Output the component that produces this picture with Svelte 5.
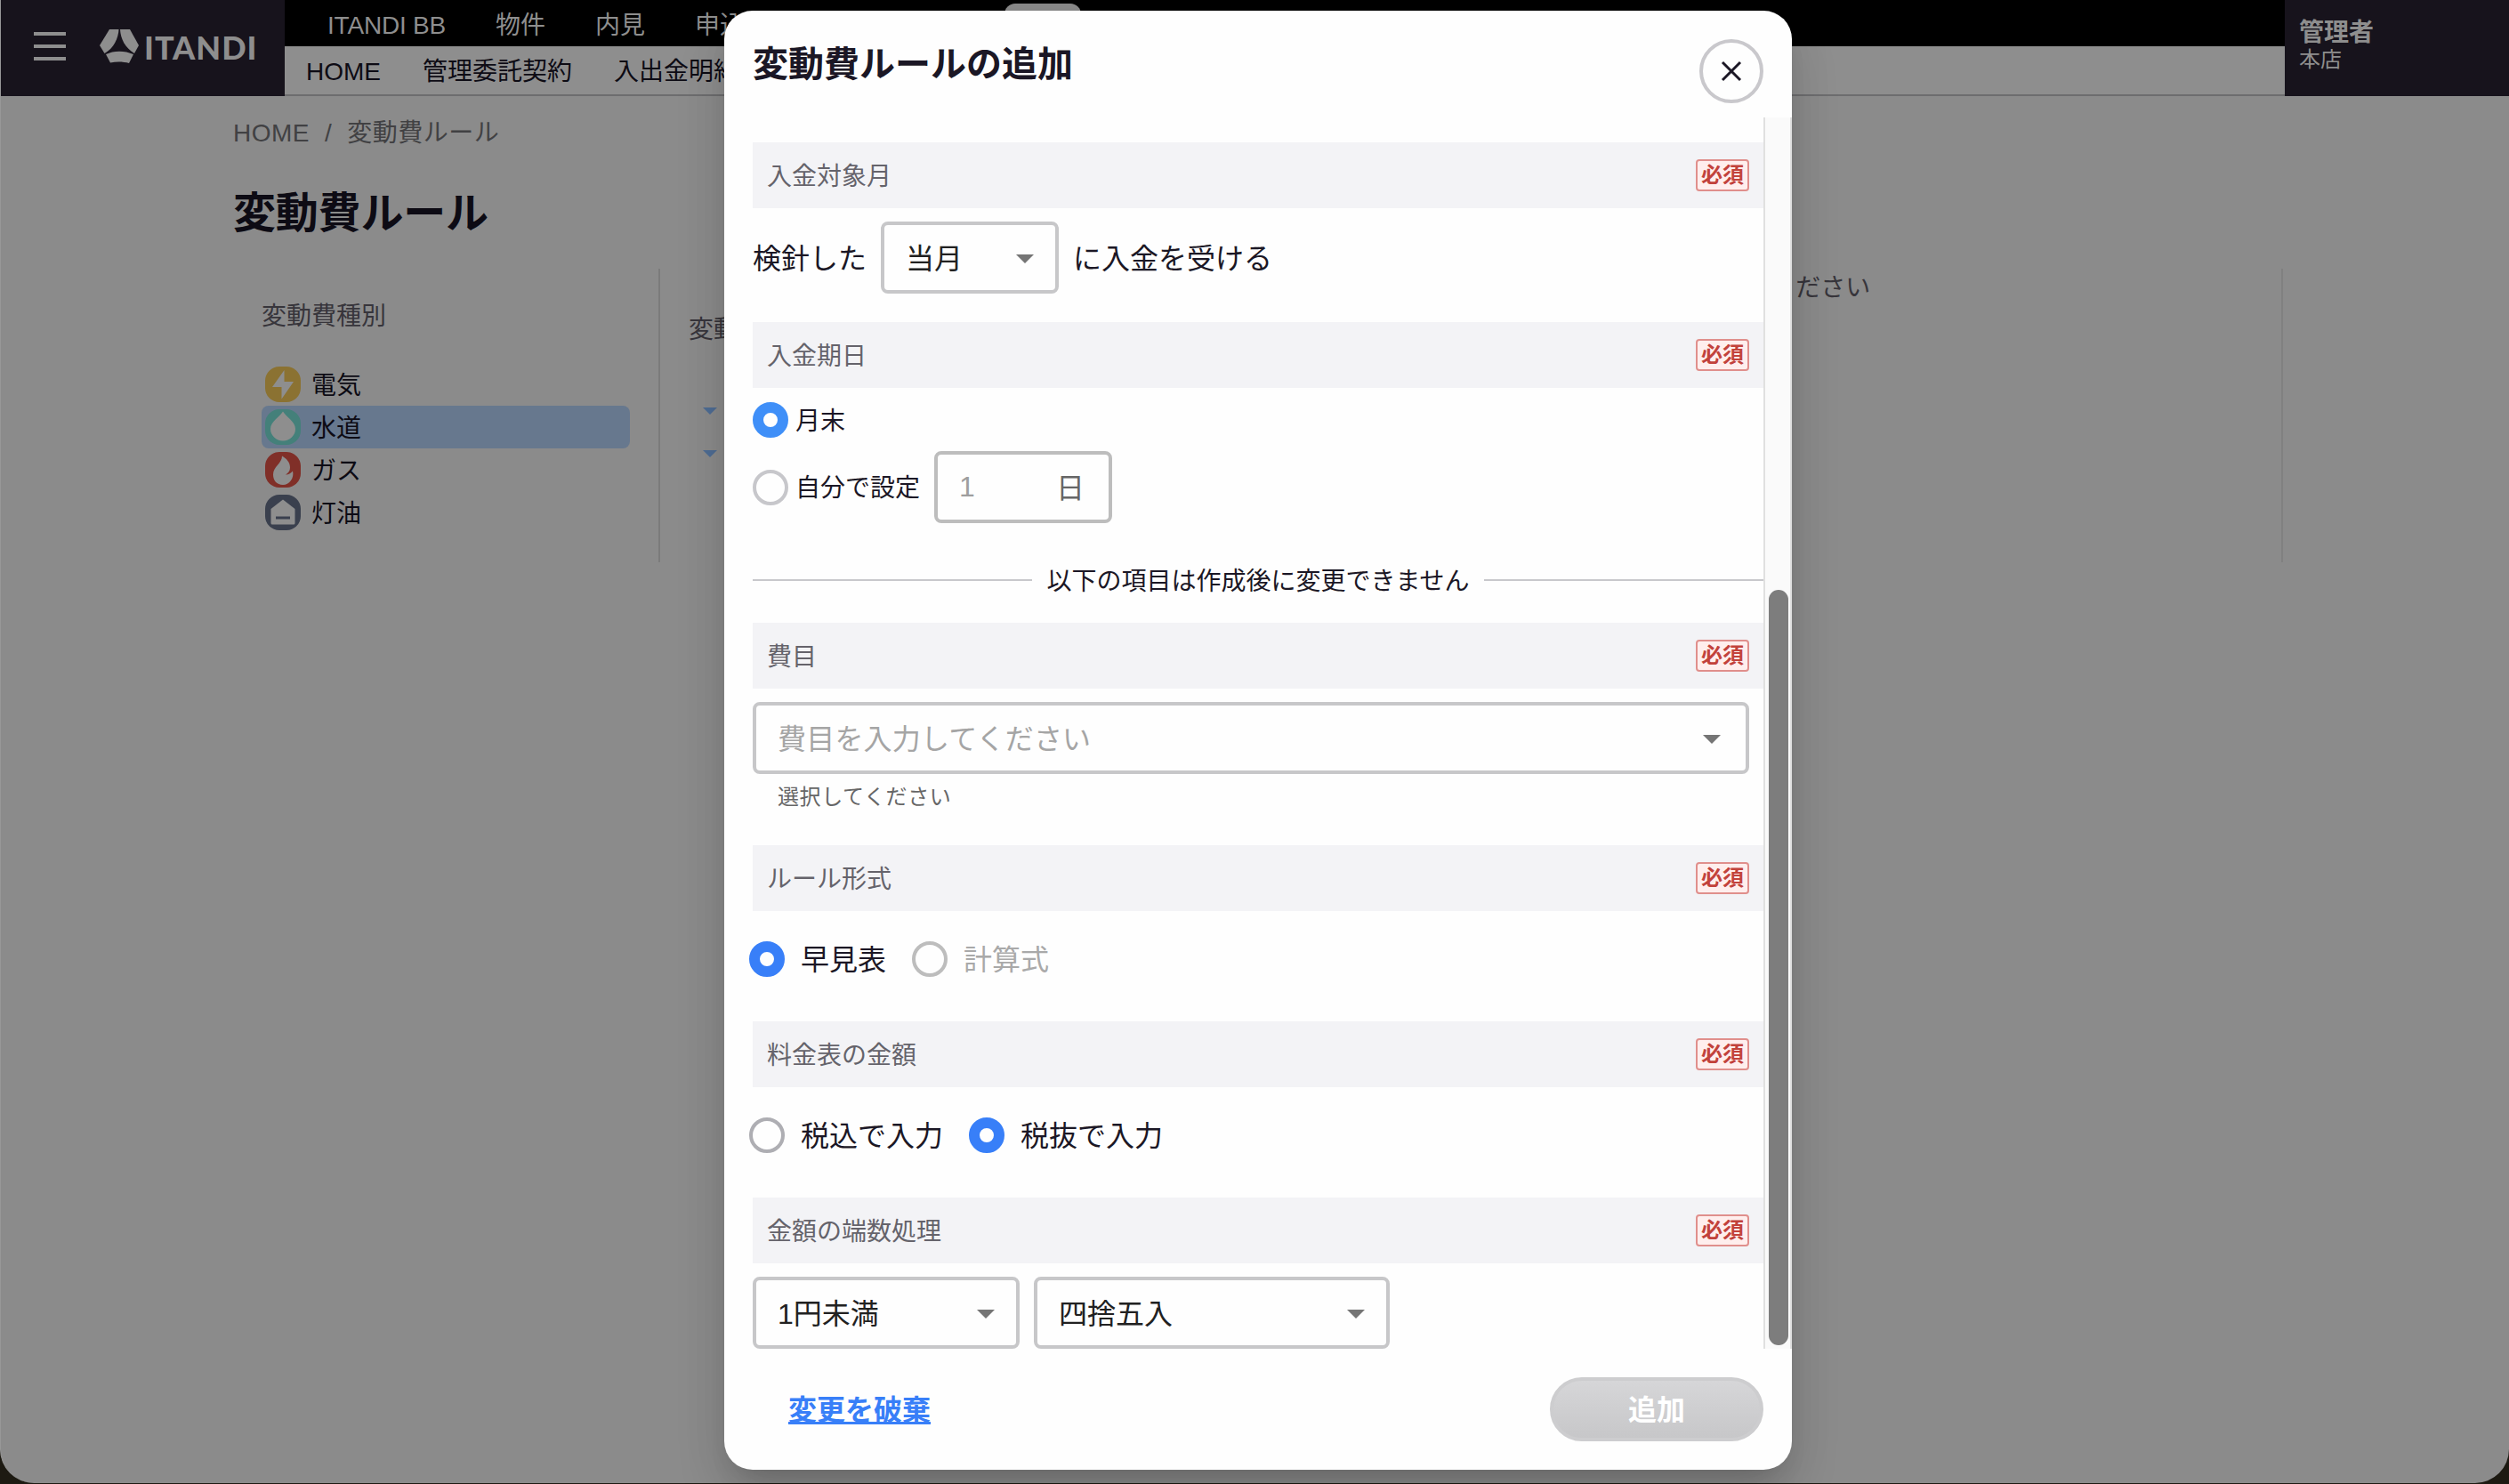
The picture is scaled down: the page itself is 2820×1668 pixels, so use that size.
<script lang="ts">
	const services = ['ITANDI BB', '物件', '内見', '申込'];
	const menus = ['HOME', '管理委託契約', '入出金明細'];

	const kinds = [
		{ id: 'electricity', label: '電気' },
		{ id: 'water', label: '水道' },
		{ id: 'gas', label: 'ガス' },
		{ id: 'kerosene', label: '灯油' }
	];

	let selectedKind = $state('water');
	let dueType = $state('end');
	let format = $state('table');
	let tax = $state('excluded');
</script>

{#snippet sectionHead(label: string)}
	<div class="section-head">
		<span class="section-label">{label}</span>
		<span class="required">必須</span>
	</div>
{/snippet}

{#snippet arrow()}
	<svg class="arrow" width="20" height="10" viewBox="0 0 20 10"><path d="M0 0h20L10 10z" /></svg>
{/snippet}

<div class="window">
	<header class="header">
		<div class="brand">
			<svg class="burger" width="36" height="32" viewBox="0 0 36 32"><path d="M0 0h36v4H0zM0 14h36v4H0zM0 28h36v4H0z" /></svg>
			<svg class="mark" width="44" height="38" viewBox="0 0 44 38">
				<path d="M11 0h10.500C21 10 16 21 5.500 27L0 18z" />
				<path d="M23 0h11l10 18-5 9C29 21 23.500 11 23 0z" />
				<path d="M7 28c9-4.500 21-4.500 31 0l-5 10c-7-2-14-2-21-.5z" />
			</svg>
			<span class="brand-name">ITANDI</span>
		</div>
		<div class="navs">
			<nav class="nav-services">
				{#each services as service}<span>{service}</span>{/each}
			</nav>
			<nav class="nav-menus">
				{#each menus as menu}<span>{menu}</span>{/each}
			</nav>
			<span class="tab"></span>
		</div>
		<div class="account">
			<strong>管理者</strong>
			<span>本店</span>
		</div>
	</header>

	<main class="page">
		<div class="breadcrumb"><span>HOME</span><span>/</span><span>変動費ルール</span></div>
		<h1>変動費ルール</h1>
		<div class="columns">
			<section class="kinds">
				<h2>変動費種別</h2>
				{#each kinds as kind}
					<button class="kind" class:selected={selectedKind === kind.id} onclick={() => (selectedKind = kind.id)}>
						<svg class={kind.id} width="40" height="40" viewBox="0 0 40 40">
							<rect width="40" height="40" rx="16" />
							{#if kind.id === 'electricity'}
								<path d="M21.500 4v13H32L18.500 36.500V23H8z" />
							{:else if kind.id === 'water'}
								<path d="M20 2.500C23 8 34 14 34 22a14 13.500 0 0 1-28 0C6 14 17 8 20 2.500z" />
							{:else if kind.id === 'gas'}
								<path d="M19 4.500c5 3 9 7 9 13 0 4-2 6-5 8 4 0 6-2 8-4 2 8-4 15.500-11 15.500-7 0-11-5-11-11.500C9 16 19 13 19 4.500z" />
							{:else}
								<path d="M20 5.500l13.500 10.500v16a1.500 1.500 0 0 1-1.500 1.500H8A1.500 1.500 0 0 1 6.500 32V16z" />
								<rect class="slot" x="12" y="24.500" width="16" height="3" />
							{/if}
						</svg>
						<span>{kind.label}</span>
					</button>
				{/each}
			</section>
			<section class="rules">
				<h2>変動費ルール</h2>
				<svg class="fold" width="16" height="8" viewBox="0 0 16 8"><path d="M0 0h16L8 8z" /></svg>
				<svg class="fold" width="16" height="8" viewBox="0 0 16 8"><path d="M0 0h16L8 8z" /></svg>
			</section>
			<section class="detail">変動費ルールを選択してください</section>
		</div>
	</main>
</div>

<div class="modal" role="dialog">
	<div class="modal-head">
		<h2>変動費ルールの追加</h2>
		<button class="close" aria-label="閉じる">
			<svg width="24" height="24" viewBox="0 0 24 24"><path d="M2 2l20 20M22 2L2 22" /></svg>
		</button>
	</div>

	<div class="modal-body">
		<div class="form">
			{@render sectionHead('入金対象月')}
			<div class="field month">
				<span>検針した</span>
				<div class="select short"><span>当月</span>{@render arrow()}</div>
				<span>に入金を受ける</span>
			</div>

			{@render sectionHead('入金期日')}
			<div class="field due">
				<button class="radio small" class:checked={dueType === 'end'} onclick={() => (dueType = 'end')}>
					<i></i><span>月末</span>
				</button>
				<div class="due-custom">
					<button class="radio small" class:checked={dueType === 'custom'} onclick={() => (dueType = 'custom')}>
						<i></i><span>自分で設定</span>
					</button>
					<div class="select short day"><span class="number">1</span><span>日</span></div>
				</div>
			</div>

			<div class="notice"><span>以下の項目は作成後に変更できません</span></div>

			{@render sectionHead('費目')}
			<div class="field item">
				<div class="select wide"><span>費目を入力してください</span>{@render arrow()}</div>
				<p>選択してください</p>
			</div>

			{@render sectionHead('ルール形式')}
			<div class="field radios">
				<button class="radio" class:checked={format === 'table'} onclick={() => (format = 'table')}>
					<i></i><span>早見表</span>
				</button>
				<button class="radio disabled" disabled><i></i><span>計算式</span></button>
			</div>

			{@render sectionHead('料金表の金額')}
			<div class="field radios">
				<button class="radio" class:checked={tax === 'included'} onclick={() => (tax = 'included')}>
					<i></i><span>税込で入力</span>
				</button>
				<button class="radio" class:checked={tax === 'excluded'} onclick={() => (tax = 'excluded')}>
					<i></i><span>税抜で入力</span>
				</button>
			</div>

			{@render sectionHead('金額の端数処理')}
			<div class="field rounding">
				<div class="select unit"><span>1円未満</span>{@render arrow()}</div>
				<div class="select method"><span>四捨五入</span>{@render arrow()}</div>
			</div>
		</div>
		<div class="scrollbar"><div class="thumb"></div></div>
	</div>

	<div class="modal-foot">
		<button class="discard">変更を破棄</button>
		<button class="submit" disabled>追加</button>
	</div>
</div>

<style>
	:global(body) {
		background: #1d1a12;
		font-family: 'Liberation Sans', 'Noto Sans CJK JP', sans-serif;
		font-size: 28px;
		color: #1b1725;
	}

	* {
		box-sizing: border-box;
	}

	button {
		padding: 0;
		border: 0;
		background: none;
		font: inherit;
		color: inherit;
	}

	h1,
	h2,
	p {
		margin: 0;
	}

	.window {
		height: 1667px;
		background: #8b8b8b;
		border-left: 1px solid #979797;
		border-radius: 0 0 38px 38px;
		overflow: hidden;
		color: #0d0b14;
	}

	.header {
		display: flex;
		height: 108px;
		margin-left: -1px;
	}

	.brand {
		display: flex;
		align-items: center;
		width: 320px;
		padding-left: 38px;
		background: #17131c;
		fill: #8e8e8e;
	}

	.burger {
		margin-bottom: 4px;
	}

	.mark {
		margin: 0 6px 4px 38px;
	}

	.brand-name {
		padding-bottom: 3px;
		color: #8e8e8e;
		font-family: Lato, sans-serif;
		font-size: 36px;
		font-weight: 900;
		letter-spacing: 1px;
		line-height: 36px;
	}

	.navs {
		position: relative;
		flex: 1;
		white-space: nowrap;
	}

	.nav-services,
	.nav-menus {
		display: flex;
	}

	.nav-services {
		gap: 56px;
		height: 52px;
		padding-left: 48px;
		background: #000;
		color: #8e8e8e;
		line-height: 57px;
	}

	.nav-services span:first-child {
		letter-spacing: -0.2px;
	}

	.nav-menus {
		gap: 47px;
		height: 56px;
		padding-left: 24px;
		background: #8e8e8e;
		border-bottom: 2px solid #6d6d6f;
		line-height: 57px;
	}

	.tab {
		position: absolute;
		left: 809px;
		top: 4px;
		width: 86px;
		height: 40px;
		border-radius: 12px;
		background: #8b8b8b;
	}

	.account {
		display: flex;
		flex-direction: column;
		width: 252px;
		padding: 20px 16px;
		background: #17131c;
		color: #8e8e8e;
		line-height: 34px;
	}

	.account span {
		font-size: 24px;
		line-height: 26px;
	}

	.page {
		padding: 20px 254px 0 261px;
	}

	.breadcrumb {
		display: flex;
		gap: 17px;
		height: 42px;
		line-height: 44px;
		letter-spacing: 0.5px;
		color: #414143;
	}

	h1 {
		height: 132px;
		padding-top: 35px;
		font-size: 48px;
		letter-spacing: -0.2px;
		line-height: 70px;
	}

	.page h2 {
		font-size: 28px;
		font-weight: 400;
		color: #37353b;
	}

	.columns {
		display: flex;
		height: 330px;
		border-right: 2px solid #808080;
	}

	.kinds {
		width: 480px;
		padding: 32px 32px 0;
		border-right: 2px solid #7b7b7b;
	}

	.kinds h2 {
		height: 74px;
		line-height: 44px;
	}

	.kind {
		display: flex;
		align-items: center;
		gap: 12px;
		width: 414px;
		height: 48px;
		padding-left: 4px;
		border-radius: 8px;
	}

	.kind span {
		padding-bottom: 3px;
	}

	.kind.selected {
		background: #67788e;
	}

	.kind path {
		fill: #8e8e8e;
	}

	.electricity rect {
		fill: #8b7232;
	}

	.water rect {
		fill: #44807a;
	}

	.gas rect {
		fill: #802f28;
	}

	.kerosene rect {
		fill: #3a404e;
	}

	.rules {
		width: 470px;
		padding: 48px 32px 0;
	}

	.rules h2 {
		height: 108px;
		line-height: 42px;
	}

	.fold {
		display: block;
		margin: 0 0 40px 16px;
		fill: #4e6c93;
	}

	.detail {
		flex: 1;
		padding-left: 472px;
		line-height: 43px;
		color: #37353b;
	}

	.modal {
		position: absolute;
		left: 814px;
		top: 12px;
		display: flex;
		flex-direction: column;
		width: 1200px;
		height: 1640px;
		background: #fefefe;
		border-radius: 32px;
		box-shadow:
			0 22px 30px -14px rgba(0, 0, 0, 0.14),
			0 30px 60px rgba(0, 0, 0, 0.1),
			0 10px 50px rgba(0, 0, 0, 0.08);
	}

	.modal-head {
		display: flex;
		justify-content: space-between;
		height: 120px;
		padding: 32px 32px 0;
	}

	.modal-head h2 {
		font-size: 40px;
		line-height: 57px;
	}

	.close {
		display: flex;
		align-items: center;
		justify-content: center;
		width: 72px;
		height: 72px;
		border: 4px solid #c9c8cc;
		border-radius: 50%;
	}

	.close path {
		stroke: #1b1725;
		stroke-width: 3;
	}

	.modal-body {
		display: flex;
		height: 1384px;
	}

	.form {
		width: 1168px;
		padding: 28px 0 0 32px;
	}

	.section-head {
		display: flex;
		align-items: center;
		justify-content: space-between;
		height: 74px;
		padding: 0 16px;
		background: #f3f3f6;
		color: #65636b;
	}

	.section-label {
		padding-bottom: 3px;
	}

	.required {
		width: 60px;
		height: 36px;
		border: 2px solid #e08f8c;
		border-radius: 4px;
		background: #ffeeed;
		color: #c2423b;
		font-size: 24px;
		font-weight: 700;
		line-height: 31px;
		text-align: center;
	}

	.field {
		display: flex;
	}

	.select {
		display: flex;
		align-items: center;
		justify-content: space-between;
		height: 81px;
		padding: 0 24px;
		border: 4px solid #c7c7c9;
		border-radius: 8px;
		font-size: 32px;
		color: #212121;
	}

	.select span {
		padding-bottom: 4px;
	}

	.short {
		width: 200px;
	}

	.arrow {
		margin-top: 2px;
		fill: #757575;
	}

	.month {
		align-items: center;
		gap: 16px;
		height: 128px;
		padding: 15px 0 32px;
		font-size: 32px;
	}

	.month > span {
		padding-bottom: 4px;
	}

	.due {
		flex-direction: column;
		height: 197px;
		padding-top: 16px;
	}

	.due-custom {
		display: flex;
		align-items: center;
		gap: 16px;
		height: 81px;
		margin-top: 15px;
	}

	.day {
		padding-right: 27px;
		border-color: #bdbdbd;
		color: #666;
	}

	.day .number {
		padding-bottom: 0;
		color: #9e9e9e;
	}

	.radio {
		display: flex;
		align-items: center;
		gap: 18px;
		height: 40px;
		font-size: 32px;
	}

	.radio span {
		padding-bottom: 4px;
	}

	.radio.small {
		gap: 8px;
		font-size: 28px;
	}

	.radio.small span {
		padding-bottom: 3px;
	}

	.radio i {
		width: 40px;
		height: 40px;
		border: 4px solid #aeaeb3;
		border-radius: 50%;
	}

	.radio.small i {
		border-color: #c7c7cb;
	}

	.radio.disabled {
		color: #a9a9a9;
	}

	.radio.disabled i {
		border-color: #bdbdbd;
	}

	.radio.checked i {
		border: 12px solid #387ff8;
	}

	.radio.small.checked i {
		border-color: #3f8ff8;
	}

	.notice {
		display: flex;
		align-items: center;
		gap: 16px;
		height: 38px;
		margin-bottom: 29px;
	}

	.notice span {
		padding-bottom: 3px;
	}

	.notice::before,
	.notice::after {
		content: '';
		flex: 1;
		height: 2px;
		background: #c8c8cc;
	}

	.item {
		flex-direction: column;
		height: 176px;
		padding-top: 15px;
	}

	.wide {
		width: 1120px;
		padding-right: 28px;
		letter-spacing: 0.2px;
		color: #a5a5a5;
	}

	.item p {
		padding-left: 28px;
		font-size: 24px;
		letter-spacing: 0.6px;
		line-height: 52px;
		color: #666;
	}

	.radios {
		gap: 29px;
		height: 124px;
		margin-left: -4px;
		padding-top: 34px;
	}

	.rounding {
		gap: 16px;
		padding-top: 15px;
	}

	.unit {
		width: 300px;
	}

	.method {
		width: 400px;
	}

	.scrollbar {
		display: flex;
		flex-direction: column;
		justify-content: flex-end;
		width: 32px;
		padding: 4px 2px 4px 4px;
		background: #fafafa;
		border: solid #e0e0e0;
		border-width: 0 2px;
	}

	.thumb {
		width: 22px;
		height: 849px;
		border-radius: 11px;
		background: #7d7d7d;
	}

	.modal-foot {
		display: flex;
		justify-content: space-between;
		padding: 32px 32px 0 72px;
		font-size: 32px;
		font-weight: 700;
	}

	.discard {
		height: 72px;
		padding-bottom: 4px;
		color: #387ff8;
		text-decoration: underline;
	}

	.submit {
		width: 240px;
		height: 72px;
		padding-bottom: 4px;
		border: 4px solid #cdcdcf;
		border-radius: 36px;
		background: linear-gradient(#d6d6d8, #c7c7c9);
		color: #fff;
	}
</style>
